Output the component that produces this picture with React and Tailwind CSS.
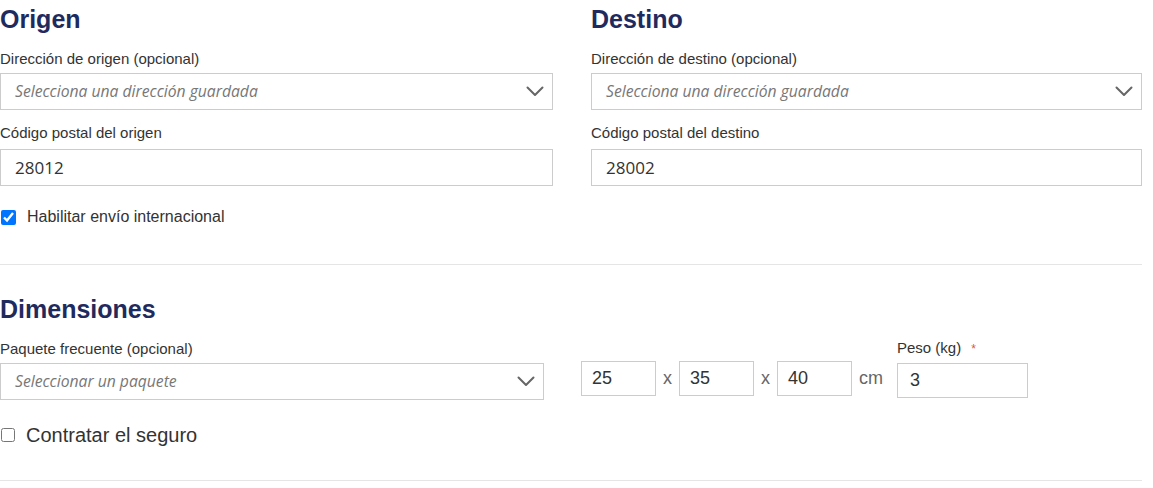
const sans = { fontFamily: '"Liberation Sans", Arial, sans-serif' };

function Chevron() {
  return (
    <svg width="18" height="11" viewBox="0 0 18 11" fill="none">
      <path d="M1.5 1.5 L9 9 L16.5 1.5" stroke="#666" strokeWidth="2" strokeLinecap="round" strokeLinejoin="round" />
    </svg>
  );
}

function Label({ children, className = "" }) {
  return (
    <label className={"block text-[15px] leading-[18px] text-[#333] " + className}>
      {children}
    </label>
  );
}

function SelectBox({ placeholder, className = "" }) {
  return (
    <div
      className={
        "flex h-[37px] items-center justify-between border border-[#ccc] bg-white pl-[14px] pr-[8px] " +
        className
      }
    >
      <span className="font-['Open_Sans'] text-[15.7px] italic text-[#777]">{placeholder}</span>
      <Chevron />
    </div>
  );
}

function TextBox({ value, className = "" }) {
  return (
    <div
      className={
        "flex h-[37px] items-center border border-[#ccc] bg-white pl-[14px] font-['Open_Sans'] text-[17px] text-[#333] " +
        className
      }
    >
      {value}
    </div>
  );
}

function DimBox({ value }) {
  return (
    <div className="flex h-[35px] w-[75px] items-center border border-[#ccc] bg-white pl-[10px] text-[18px] text-[#333]">
      {value}
    </div>
  );
}

export default function App() {
  return (
    <div className="w-[1142px] bg-white pt-[5px]" style={sans}>
      <div className="grid grid-cols-[553px_551px] gap-x-[38px]">
        <div>
          <h2 className="text-[25px] font-bold leading-[28px] text-[#1f2b5e]">Origen</h2>
          <Label className="mt-[17px]">Dirección de origen (opcional)</Label>
          <SelectBox placeholder="Selecciona una dirección guardada" className="mt-[5px]" />
          <Label className="mt-[14px]">Código postal del origen</Label>
          <TextBox value="28012" className="mt-[7px]" />
          <div className="mt-[21px] flex h-[20px] items-center gap-[11px] pl-[1px]">
            <input type="checkbox" defaultChecked className="m-0 h-[15px] w-[15px] accent-[#0075ff]" />
            <span className="text-[16px] leading-[20px] text-[#333]">Habilitar envío internacional</span>
          </div>
        </div>
        <div>
          <h2 className="text-[25px] font-bold leading-[28px] text-[#1f2b5e]">Destino</h2>
          <Label className="mt-[17px]">Dirección de destino (opcional)</Label>
          <SelectBox placeholder="Selecciona una dirección guardada" className="mt-[5px]" />
          <Label className="mt-[14px]">Código postal del destino</Label>
          <TextBox value="28002" className="mt-[7px]" />
        </div>
      </div>

      <div className="mt-[37px] border-t border-[#e5e5e5]" />

      <h2 className="mt-[30px] text-[25px] font-bold leading-[28px] text-[#1f2b5e]">Dimensiones</h2>
      <div className="mt-[16px] flex items-end">
        <div className="w-[544px]">
          <Label>Paquete frecuente (opcional)</Label>
          <SelectBox placeholder="Seleccionar un paquete" className="mt-[5px]" />
        </div>
        <div className="mb-[4px] ml-[37px] flex items-center">
          <DimBox value="25" />
          <span className="mx-[7px] text-[18px] text-[#666]">x</span>
          <DimBox value="35" />
          <span className="mx-[7px] text-[18px] text-[#666]">x</span>
          <DimBox value="40" />
          <span className="ml-[7px] text-[18px] text-[#666]">cm</span>
        </div>
        <div className="mb-[2px] ml-[14px] w-[131px]">
          <Label>
            Peso (kg)<span className="ml-[10px] text-[12px] text-[#e5533d]">*</span>
          </Label>
          <div className="mt-[5px] flex h-[35px] items-center border border-[#ccc] bg-white pl-[12px] text-[18px] text-[#333]">
            3
          </div>
        </div>
      </div>
      <div className="mt-[23px] flex h-[24px] items-center gap-[11px] pl-[1px]">
        <input type="checkbox" className="m-0 h-[14px] w-[14px]" />
        <span className="text-[20px] leading-[24px] text-[#333]">Contratar el seguro</span>
      </div>
      <div className="mt-[33px] border-t border-[#e5e5e5]" />
    </div>
  );
}
